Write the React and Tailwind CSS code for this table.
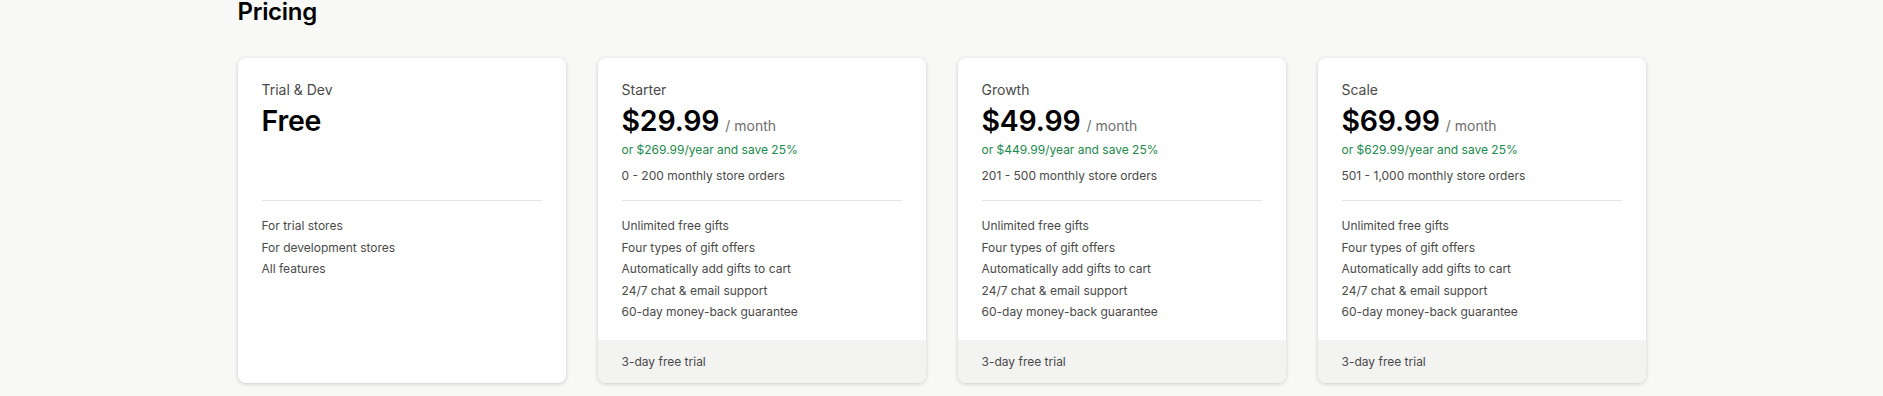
const PLANS = [
  {
    name: 'Trial & Dev',
    price: 'Free',
    features: ['For trial stores', 'For development stores', 'All features'],
  },
  {
    name: 'Starter',
    price: '$29.99',
    yearly: 'or $269.99/year and save 25%',
    orders: '0 - 200 monthly store orders',
    trial: true,
  },
  {
    name: 'Growth',
    price: '$49.99',
    yearly: 'or $449.99/year and save 25%',
    orders: '201 - 500 monthly store orders',
    trial: true,
  },
  {
    name: 'Scale',
    price: '$69.99',
    yearly: 'or $629.99/year and save 25%',
    orders: '501 - 1,000 monthly store orders',
    trial: true,
  },
];

const PAID_FEATURES = [
  'Unlimited free gifts',
  'Four types of gift offers',
  'Automatically add gifts to cart',
  '24/7 chat & email support',
  '60-day money-back guarantee',
];

function PlanCard({ plan }) {
  const features = plan.features || PAID_FEATURES;
  return (
    <div className="bg-white rounded-lg shadow-[0_1px_4px_rgba(0,0,0,0.18)] flex flex-col overflow-hidden">
      <div className="px-6 pt-[22px] flex-1">
        <div className="h-[120px]">
          <div className="text-sm leading-5 text-[#4a4a4a]">{plan.name}</div>
          <div className="flex items-baseline gap-1.5 mt-[3px]">
            <span className="text-[28.5px] leading-9 font-semibold text-black tracking-[-0.2px]">{plan.price}</span>
            {plan.trial && <span className="text-sm text-[#6e6e6e]">/ month</span>}
          </div>
          {plan.yearly && (
            <div className="text-xs leading-5 text-[#1b8a4c] mt-px">{plan.yearly}</div>
          )}
          {plan.orders && (
            <div className="text-xs leading-5 text-[#4a4a4a] mt-[6px]">{plan.orders}</div>
          )}
        </div>
        <div className="border-t border-[#e3e3e3]" />
        <ul className="pt-[14px] pb-4">
          {features.map(f => (
            <li key={f} className="text-xs leading-[21.5px] text-[#4a4a4a]">{f}</li>
          ))}
        </ul>
      </div>
      {plan.trial ? (
        <div className="h-[43px] bg-[#f3f3f2] px-6 flex items-center text-xs text-[#4a4a4a]">
          3-day free trial
        </div>
      ) : (
        <div className="h-[43px]" />
      )}
    </div>
  );
}

export default function App() {
  return (
    <div className="min-h-[396px] bg-[#f8f8f7] font-['Inter',sans-serif]">
      <div className="w-[1408px] mx-auto">
        <h1 className="text-2xl leading-none font-semibold tracking-[-0.3px] text-black">Pricing</h1>
        <div className="grid grid-cols-4 gap-8 mt-[34px] h-[325px]">
          {PLANS.map(p => <PlanCard key={p.name} plan={p} />)}
        </div>
      </div>
    </div>
  );
}
